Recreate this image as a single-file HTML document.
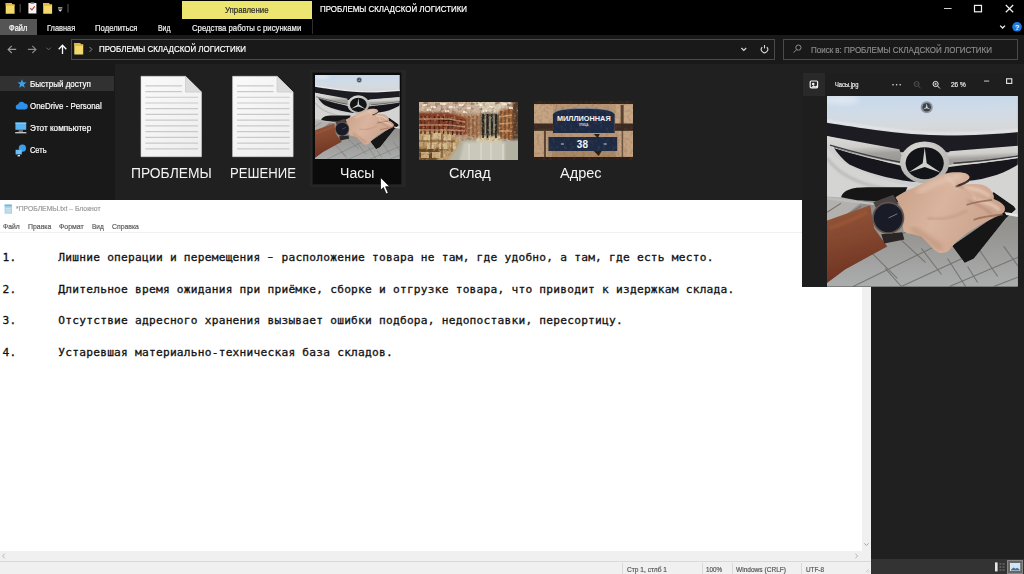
<!DOCTYPE html>
<html lang="ru"><head><meta charset="utf-8"><title>ПРОБЛЕМЫ СКЛАДСКОЙ ЛОГИСТИКИ</title>
<style>
html,body{margin:0;padding:0;}
body{width:1024px;height:574px;position:relative;overflow:hidden;background:#191919;font-family:"Liberation Sans",sans-serif;}
.a{position:absolute;}
.t{-webkit-text-stroke:0.2px currentColor;position:absolute;white-space:nowrap;transform-origin:0 50%;font-family:"Liberation Sans",sans-serif;}
svg{position:absolute;display:block;overflow:visible;}
#titlebar{left:0;top:0;width:1024px;height:35px;background:#000;}
#addrrow{left:0;top:35px;width:1024px;height:28px;background:#191919;}
#nav{left:0;top:63px;width:115px;height:137px;background:#191919;}
#content{left:115.300px;top:63.600px;width:909px;height:511px;background:#202020;}
#ytab{left:182px;top:0.5px;width:130px;height:18.2px;background:#ece56f;}
#filetab{left:0;top:19px;width:37px;height:16px;background:#555;}
.box{border:1px solid #4a4a4a;box-sizing:border-box;background:#191919;}
#navsel{left:0;top:76px;width:113.500px;height:15.200px;background:#313131;}
#tilesel{left:312px;top:72px;width:90px;height:113px;background:#0b0b0b;border:1px solid #1c1c1c;box-sizing:border-box;}
#notepad{left:0;top:200px;width:871px;height:374px;background:#fff;}
#np_menu_line{left:0;top:232px;width:871px;height:1px;background:#f0f0f0;}
#np_vscroll{left:862px;top:233px;width:9px;height:318px;background:#f0f0f0;}
#np_hscroll{left:0;top:551px;width:871px;height:10px;background:#f0f0f0;}
#np_status{left:0;top:561px;width:871px;height:13px;background:#f0f0f0;border-top:1px solid #d9d9d9;box-sizing:border-box;}
.sdiv{position:absolute;top:563px;width:1px;height:11px;background:#d9d9d9;}
#pv{left:802px;top:72.500px;width:222px;height:214px;background:#1e1e1e;}
#pvicon{left:802.500px;top:72.500px;width:22.800px;height:23.700px;background:#292929;}
#exstatus{left:871px;top:559px;width:153px;height:15px;background:#333;}
#viewsel{left:1007px;top:560px;width:16px;height:14px;background:#666;border:1px solid #888;box-sizing:border-box;}
pre#txt{position:absolute;left:2.6px;top:250.1px;margin:0;font-family:"DejaVu Sans Mono","Liberation Mono",monospace;font-size:11.2px;letter-spacing:0.235px;line-height:15.85px;color:#111;-webkit-text-stroke:0.3px #111;tab-size:8;-moz-tab-size:8;white-space:pre;}

</style></head><body>
<svg width="0" height="0" style="left:0;top:0"><defs>
<clipPath id="whclip"><path d="M0 0H99V39H40L28 58H0z"/></clipPath>
<filter id="nzd" x="0" y="0" width="100%" height="100%"><feTurbulence type="fractalNoise" baseFrequency="0.33" numOctaves="2" seed="4"/><feColorMatrix type="matrix" values="0 0 0 0 0.16  0 0 0 0 0.09  0 0 0 0 0.05  0 0 0 3.2 -1.5"/></filter>
<filter id="nzl" x="0" y="0" width="100%" height="100%"><feTurbulence type="fractalNoise" baseFrequency="0.4" numOctaves="2" seed="11"/><feColorMatrix type="matrix" values="0 0 0 0 1  0 0 0 0 0.93  0 0 0 0 0.82  0 0 0 3.2 -1.7"/></filter>
<filter id="bl1" x="-10%" y="-10%" width="120%" height="120%"><feGaussianBlur stdDeviation="1.1"/></filter>
<filter id="bl2" x="-10%" y="-10%" width="120%" height="120%"><feGaussianBlur stdDeviation="2.4"/></filter>
<filter id="bl05" x="-10%" y="-10%" width="120%" height="120%"><feGaussianBlur stdDeviation="0.5"/></filter>
<linearGradient id="g-hood" x1="0.3" y1="0" x2="0.4" y2="1"><stop offset="0" stop-color="#c6d8ec"/><stop offset="0.45" stop-color="#d0dbe6"/><stop offset="0.8" stop-color="#d6d9dc"/><stop offset="1" stop-color="#d2d3d4"/></linearGradient>
<linearGradient id="g-bar" x1="0" y1="0" x2="0.15" y2="1"><stop offset="0" stop-color="#dcdcda"/><stop offset="0.45" stop-color="#cfcecb"/><stop offset="0.7" stop-color="#a3a19d"/><stop offset="1" stop-color="#999793"/></linearGradient>
<linearGradient id="g-skin" x1="0" y1="0" x2="1" y2="0.4"><stop offset="0" stop-color="#c99f86"/><stop offset="0.5" stop-color="#d9b49e"/><stop offset="1" stop-color="#cba28c"/></linearGradient>
<linearGradient id="g-pave" x1="0" y1="0" x2="0" y2="1"><stop offset="0" stop-color="#8f8d8b"/><stop offset="0.35" stop-color="#93928f"/><stop offset="1" stop-color="#acaeae"/></linearGradient>
<linearGradient id="g-sleeve" x1="0.3" y1="0" x2="0.5" y2="1"><stop offset="0" stop-color="#95563a"/><stop offset="0.6" stop-color="#7c402a"/><stop offset="1" stop-color="#6a2e20"/></linearGradient>
<radialGradient id="g-ring" cx="0.4" cy="0.3" r="0.8"><stop offset="0" stop-color="#e3e2df"/><stop offset="1" stop-color="#a9a8a4"/></radialGradient>

<symbol id="ph-watch" viewBox="0 0 190 190" preserveAspectRatio="none">
  <rect width="190" height="190" fill="#cdcecf"/>
  <!-- pavement -->
  <g filter="url(#bl05)">
  <path d="M-2 99L70 104 192 116V192H-2z" fill="url(#g-pave)"/>
  <path d="M-2 99L40 102 10 125 -2 128z" fill="#b2b1ae"/>
  <g stroke="#6e6d6a" stroke-width="1.100" fill="none" opacity="0.850">
    <path d="M0 176L82 134M26 190L124 142M74 190L152 154M122 190L192 160M166 190L192 180"/>
    <path d="M42 154L70 182M70 140L98 166M94 152L114 178M120 162L138 190M152 154L170 180M176 150L192 172M58 172L74 190M140 170L150 186"/>
    <path d="M0 116L14 107M2 130L34 110"/>
  </g>
  </g>
  <!-- hood -->
  <path d="M-2 -2H192V36C170 38 145 39.500 120 39.500 96 39.500 72 37 48 34 24 30.500 10 28.500 -2 26.500z" fill="url(#g-hood)"/>
  <path d="M-2 24.500C10 26.500 24 28.500 48 32 72 35 96 37.500 120 37.500 145 37.500 170 36 192 34" stroke="#e6e8ea" stroke-width="2.400" fill="none" filter="url(#bl1)"/>
  <ellipse cx="14" cy="4" rx="18" ry="5" fill="#dde6f0" filter="url(#bl2)"/>
  <!-- upper dark grille band -->
  <path d="M-2 26.500C10 28.500 24 30.500 48 34 72 37 96 39.500 120 39.500 145 39.500 170 38 192 36V50L122 56H72L-2 39.600z" fill="#1b1c20" filter="url(#bl05)"/>
  <!-- bumper white zone -->
  <path d="M-2 48C6 62 30 80 85 90 125 93 165 85 192 64V118L60 104 -2 100z" fill="#d4d4d3"/>
  <path d="M0 62C14 82 40 92 84 96" stroke="#bcbcbb" stroke-width="3" fill="none" filter="url(#bl1)"/>
  <!-- lower dark grille band -->
  <path d="M6 50C30 58 55 65 76 70L120 71C150 67 172 65 192 61.500V67C180 76 160 83 138 85L85 85.500C60 82 38 76 22.300 68.200 16 63.500 10 57 6 50z" fill="#17181b" filter="url(#bl05)"/>
  <!-- silver wings -->
  <path d="M-2 39.600L72 53 78 68C50 64 20 56 -2 47z" fill="url(#g-bar)"/>
  <path d="M192 49.500L122 55 118 69C150 66.500 175 62 192 58z" fill="url(#g-bar)"/>
  <path d="M3 49C30 57 55 63 76 66.500" stroke="#3c3d41" stroke-width="1.500" fill="none"/>
  <path d="M192 59.500C170 63 150 65.500 126 67" stroke="#3c3d41" stroke-width="1.400" fill="none"/>
  <path d="M5 51C30 59 55 65 78 69" stroke="#d8d8d6" stroke-width="1" fill="none"/>
  <path d="M192 61C170 64.500 150 67 124 69" stroke="#d8d8d6" stroke-width="1" fill="none"/>
  <!-- ring -->
  <ellipse cx="97.300" cy="66.200" rx="24.500" ry="20.800" fill="url(#g-ring)"/>
  <ellipse cx="97.300" cy="67" rx="19" ry="16" fill="#131417"/>
  <path d="M97.300 51L99.300 67 113.500 76.500 97.300 70.800 81.500 76 95.300 67z" fill="#cfcfcb"/>
  <!-- hood badge -->
  <circle cx="99.300" cy="11.200" r="6" fill="#8e959c"/><circle cx="99.300" cy="11.200" r="4.300" fill="#3c434c"/><path d="M99.300 7.200l.8 4 3 2.200-3.800-1.200-3.800 1.200 3-2.200z" fill="#d8dde2"/>
  <!-- lower intake -->
  <path d="M14 101C16 94 24 91 40 91H80L74 106 30 104z" fill="#151618" filter="url(#bl05)"/>
  <path d="M0 102L50 108 72 111" stroke="#bdbdbb" stroke-width="2.200" fill="none"/>
  <!-- black cloth -->
  <path d="M124.700 149.400L137.200 166.400 146.200 162 178 122 188 113 186 110 166 96 158 100 170 118z" fill="#121214" filter="url(#bl05)"/>
  <path d="M176.700 115.600L192 118V121L178.500 118.800z" fill="#e8e8e8"/>
  <!-- sleeve -->
  <path d="M-2 125L43 109 47 132 60 150 18 173 -2 188z" fill="url(#g-sleeve)" filter="url(#bl05)"/>
  <path d="M2 132C14 128 28 122 40 116" stroke="#a35d38" stroke-width="3" fill="none" opacity="0.600" filter="url(#bl1)"/>
  <!-- hand -->
  <g filter="url(#bl05)">
  <path d="M68.200 100.900C74 97 80 94 85.200 92 93 88 100 85 106.700 82 111 80 114 78.500 117.500 77.600 122 76.300 126 76 130 76.100 134 76.200 137 76.500 139 77.600 141.500 79 142.500 80.500 141.700 82 140 85 136 87 131 88.500 138 88 146 87.500 153.400 88.300 159 89.500 162 92 164.200 95.500 166 98 166.600 100.500 166 102.700 170 104 174 106.500 176.700 109.900 178 113 177 115.500 175 117 173 119 170.500 120 167.800 120.600L153.400 127.800 139 136.800 128.300 145.800 121 154.700C118 156.500 115 157 112 156.500 108 155 105.500 152.500 103 149.400L94.200 140.400C89 138.500 84 137.500 79.800 136.800L76.200 135C75 128 75 120 75.300 113.500 73 109 70.500 105 68.200 100.900z" fill="url(#g-skin)"/>
  </g>
  <path d="M90 96C104 88 118 82 134 80" stroke="#e9cdbb" stroke-width="4" fill="none" opacity="0.800" filter="url(#bl2)"/>
  <path d="M138 92C148 92 156 95 162 100M150 104C160 106 168 110 172 114" stroke="#e6c8b5" stroke-width="3.500" fill="none" opacity="0.800" filter="url(#bl1)"/>
  <path d="M128 89C136 90 142 94 146 100M140 104C150 108 158 112 164 118" stroke="#b08068" stroke-width="1.600" fill="none" opacity="0.700" filter="url(#bl1)"/>
  <path d="M84 132C96 138 106 146 114 152" stroke="#b58870" stroke-width="5" fill="none" opacity="0.600" filter="url(#bl2)"/>
  <path d="M100 122C112 124 126 122 140 114" stroke="#c29a84" stroke-width="3" fill="none" opacity="0.600" filter="url(#bl1)"/>
  <path d="M128 90.500C132 89 137 87.500 141 84.500" stroke="#2a1e1a" stroke-width="2.200" fill="none" opacity="0.850" filter="url(#bl05)"/>
  <path d="M164.500 103.600C156 104.500 147 106 139 108.500" stroke="#8a6450" stroke-width="1.800" fill="none" opacity="0.750" filter="url(#bl05)"/>
  <path d="M175 118.200C166 119 155 120.500 146 123.500" stroke="#8a6450" stroke-width="1.800" fill="none" opacity="0.700" filter="url(#bl05)"/>
  <path d="M118 80C124 84 128 88 130 93M136 90C142 94 146 98 148 104" stroke="#e8ccba" stroke-width="2.500" fill="none" opacity="0.600" filter="url(#bl1)"/>
  <!-- strap + watch -->
  <path d="M46 106L66 98.500 71 108 50 114z" fill="#4a4341"/>
  <path d="M54 138L75 136 77 143 57 147z" fill="#2a2625"/>
  <circle cx="61" cy="121.500" r="16" fill="#62564f"/>
  <circle cx="61" cy="121.500" r="14.300" fill="#191b26"/>
  <path d="M61.300 121.600L70 117.500" stroke="#8a8f9a" stroke-width="0.800"/>
</symbol>

<symbol id="ph-wh" viewBox="0 0 99 58" preserveAspectRatio="none">
  <rect width="99" height="58" fill="#b59a7c"/>
  <g filter="url(#bl1)">
    <rect x="-2" y="-2" width="103" height="13" fill="#cbb098"/>
    <path d="M52 -2H100V10L66 15z" fill="#d8c9b2"/>
    <path d="M-2 10H28L48 16V33L30 31H-2z" fill="#873a21"/>
    <path d="M28 9L62 14V36L48 33V16z" fill="#ad7e5a"/>
    <path d="M62 11H80V35H62z" fill="#4f4a3b"/>
    <path d="M80 8L93 5V38L80 36z" fill="#a9693a"/>
    <rect x="93" y="-2" width="8" height="42" fill="#5a3a26"/>
    <path d="M28 38H101V60H22z" fill="#b3b1a2"/>
    <path d="M45 40H86V60H40z" fill="#c9c8bb"/>
    <path d="M-2 29H30L42 40 28 60H-2z" fill="#bd9a68"/>
    <path d="M-2 46H22L18 60H-2z" fill="#70481f"/>
    <rect x="58" y="34" width="24" height="6" fill="#d6c6a0"/>
  </g>
  <g filter="url(#bl05)">
    <path d="M2 14v18M6 14v18M11 14v18M15.500 14v18M20 14v18M24.500 14v18M29 15v17M33.500 16v17M38 17v16M42 17v16" stroke="#4e1d10" stroke-width="1.300"/>
    <path d="M0 17H30L46 20M0 23H30L46 25M0 28H30L46 29" stroke="#e0b890" stroke-width="1.300" opacity="0.650"/>
    <path d="M3 3h5M12 5h5M21 2h6M30 5h6M40 3h5M48 6h4M58 3h6M70 5h5M82 2h6M8 8h4M26 9h4M44 10h4M64 9h4M90 6h4" stroke="#fff3e4" stroke-width="1.700"/>
    <path d="M5 1h4M16 2h5M34 1h5M52 2h4M76 1h5M88 3h4M22 7h3M60 7h3" stroke="#8a6a58" stroke-width="1.300" opacity="0.700"/>
    <path d="M50 14v20M54 14v21M58 14v22" stroke="#6e3a20" stroke-width="1" opacity="0.800"/>
    <path d="M64 12v24M68.500 12v24M73 12v22M77 12v24" stroke="#1f1e16" stroke-width="1.700"/>
    <path d="M66.300 14v18M71 14v18M75 13v18" stroke="#d8d4c0" stroke-width="0.900" opacity="0.800"/>
    <path d="M82 9v28M86 8v29M90 7v31" stroke="#5e3a20" stroke-width="1.100"/>
    <path d="M80 15L93 13M80 22L93 21M80 29L93 29" stroke="#e0bc90" stroke-width="1.300" opacity="0.700"/>
    <path d="M4 33h7v5h-7zM14 31h8v6h-8zM25 33h7v6h-7zM8 41h9v6H8zM20 41h8v6h-8zM2 50h8v6H2zM13 50h8v6h-8zM31 41h6v6h-6z" fill="#dcc296" opacity="0.800"/>
    <path d="M0 39h36M0 48h30M12 31v26M23 32v24M33 38v12" stroke="#5a3816" stroke-width="1.100" opacity="0.750"/>
    <path d="M50 42v16M62 41v17M72 41v17M84 42v16" stroke="#e4e4da" stroke-width="1.600" opacity="0.550"/>
  </g>
  <g clip-path="url(#whclip)"><rect width="99" height="58" filter="url(#nzd)" opacity="0.450"/>
  <rect width="99" height="58" filter="url(#nzl)" opacity="0.350"/></g>
</symbol>

<symbol id="ph-addr" viewBox="0 0 100 59" preserveAspectRatio="none">
  <rect width="100" height="59" fill="#b89675"/>
  <g filter="url(#bl05)">
  <rect x="0" y="0" width="100" height="3" fill="#2e221a"/>
  <rect x="0" y="56" width="100" height="3" fill="#2a1f18"/>
  <rect x="0" y="3.700" width="19" height="19" fill="#c4a482"/><rect x="82" y="3.700" width="18" height="19" fill="#c7a786"/><rect x="87" y="4" width="3" height="26" fill="#5a4030"/>
  <rect x="0" y="22.500" width="19" height="7.300" fill="#3a2a20"/><rect x="81" y="22.500" width="19" height="7.300" fill="#3a2a20"/>
  <rect x="0" y="30" width="13" height="25" fill="#c0a07e"/><rect x="85" y="30" width="15" height="25" fill="#c2a280"/>
  <rect x="10" y="30" width="2" height="26" fill="#5a4434"/><rect x="88" y="30" width="1.500" height="26" fill="#6a5240"/>
  <rect x="18" y="50" width="64" height="6" fill="#a88866"/>
  <path d="M19 13C22 9 30 7.500 50 7.500S78 9 81 13V32H19z" fill="#1c2b45"/>
  <path d="M19 13C22 9 30 7.500 50 7.500S78 9 81 13" fill="none" stroke="#8a9ab0" stroke-width="0.600"/>
  <rect x="14.500" y="36" width="69" height="14" fill="#1b2a44"/>
  <path d="M60 33l6 0 -2 4z" fill="#241c18"/><path d="M60 50l8 0 -3 5z" fill="#241c18"/>
  </g>
  <rect width="100" height="59" filter="url(#nzd)" opacity="0.250"/>
  <text x="50" y="19.900" font-family="Liberation Sans, sans-serif" font-weight="bold" font-size="7.200" fill="#f2f4f8" text-anchor="middle" textLength="54" lengthAdjust="spacingAndGlyphs">МИЛЛИОННАЯ</text>
  <text x="50" y="24.600" font-family="Liberation Sans, sans-serif" font-weight="bold" font-size="2.800" fill="#cfd6e2" text-anchor="middle">УЛИЦА</text>
  <text x="48.600" y="46.800" font-family="Liberation Sans, sans-serif" font-weight="bold" font-size="10" fill="#f2f4f8" text-anchor="middle">38</text>
  <path d="M27 43h3M70 43h3" stroke="#d0d6e0" stroke-width="1.200"/>
</symbol>

</defs></svg>

<div class="a" id="content"></div>
<div class="a" id="titlebar"></div>
<div class="a" id="addrrow"></div>
<div class="a" id="nav"></div>
<div class="a" id="ytab"></div>
<div class="a" id="filetab"></div>
<div class="a" style="left:311.500px;top:19px;width:1px;height:15px;background:#2e2e2e"></div>
<div class="a box" style="left:71px;top:39px;width:704px;height:21px"></div>
<div class="a box" style="left:783px;top:39px;width:235px;height:21px"></div>
<div class="a" id="navsel"></div>
<div class="a" style="left:310px;top:69.500px;width:95.500px;height:117px;background:#262626"></div>
<div class="a" id="tilesel"></div>

<!-- title bar quick-access icons, window buttons, nav arrows -->
<svg id="chrome" width="1024" height="64" viewBox="0 0 1024 64" style="left:0;top:0">
  <!-- QAT -->
  <path d="M5.7 3h5.6l1.2 1.6h2.1v9.1H5.7z" fill="#f3d86a"/><path d="M5.7 3h5.6l1.2 1.6h2.1v1.2H5.7z" fill="#e2b84a"/>
  <rect x="19.6" y="4" width="1.2" height="8.5" fill="#4a4a4a"/>
  <rect x="28.4" y="3" width="8" height="10.5" fill="#f4f4f4"/><path d="M30.3 8.2l1.6 1.8 2.8-3.6" stroke="#c0392b" stroke-width="1.1" fill="none"/><rect x="30.5" y="2.4" width="3.8" height="1.6" fill="#9a9a9a"/>
  <path d="M43.2 3h5.6l1.2 1.6h2.1v9.1h-8.9z" fill="#f3d86a"/><path d="M43.2 3h5.6l1.2 1.6h2.1v1.2h-8.9z" fill="#e2b84a"/>
  <rect x="58" y="7.4" width="4.4" height="1" fill="#e8e8e8"/><path d="M58 9.4h4.4l-2.2 2.4z" fill="#e8e8e8"/>
  <rect x="67.4" y="4" width="1.2" height="8.5" fill="#4a4a4a"/>
  <!-- window buttons -->
  <rect x="944" y="8" width="7.6" height="0.9" fill="#e6e6e6"/>
  <rect x="974.5" y="5.4" width="7" height="6.4" fill="none" stroke="#f2f2f2" stroke-width="1.2"/>
  <path d="M1005.8 5l7.4 7.2M1013.2 5l-7.4 7.2" stroke="#f2f2f2" stroke-width="1.2" fill="none"/>
  <path d="M1000.2 25.6l2.4 2.4 2.4-2.4" stroke="#f2f2f2" stroke-width="1.3" fill="none"/>
  <circle cx="1017" cy="26.8" r="4.8" fill="#1f7ae0"/>
  <text x="1017" y="29.6" font-family="Liberation Sans, sans-serif" font-size="7.6" font-weight="bold" fill="#fff" text-anchor="middle">?</text>
  <!-- nav arrows -->
  <path d="M16.2 49.4H8.2M11.8 45.8l-3.7 3.6 3.7 3.6" stroke="#9a9a9a" stroke-width="1.1" fill="none"/>
  <path d="M27.9 49.4h8M32.3 45.8l3.7 3.6-3.7 3.6" stroke="#8a8a8a" stroke-width="1.1" fill="none"/>
  <path d="M46.4 47.6l2.2 2.2 2.2-2.2" stroke="#6a6a6a" stroke-width="1" fill="none"/>
  <path d="M62.5 54V45.4M58.7 49.2l3.8-3.9 3.8 3.9" stroke="#ffffff" stroke-width="1.3" fill="none"/>
  <path d="M74.3 43h5.6l1.2 1.6h2.1v10H74.3z" fill="#f3d86a"/><path d="M74.3 43h5.6l1.2 1.6h2.1v1.3H74.3z" fill="#e2b84a"/>
  <path d="M89.6 47l2.3 2.4-2.3 2.4" stroke="#9a9a9a" stroke-width="0.9" fill="none"/>
  <path d="M741.4 48l2.4 2.4 2.4-2.4" stroke="#d8d8d8" stroke-width="1.2" fill="none"/>
  <path d="M762.2 47.2a3.2 3.2 0 1 0 4.6 0" stroke="#d8d8d8" stroke-width="1.1" fill="none"/><path d="M764.5 45v3.4" stroke="#d8d8d8" stroke-width="1.1"/>
  <circle cx="798.4" cy="47.6" r="2.6" stroke="#9a9a9a" stroke-width="0.9" fill="none"/><path d="M796.6 49.6l-3 3" stroke="#9a9a9a" stroke-width="0.9"/>
</svg>

<!-- nav icons -->
<svg id="navicons" width="115" height="140" viewBox="0 60 115 140" style="left:0;top:60px">
  <path d="M22 79.2l1.2 3.1 3.3.2-2.6 2.1.9 3.2-2.8-1.8-2.8 1.8.9-3.2-2.6-2.1 3.3-.2z" fill="#3aa0ee"/>
  <path d="M17.6 109.4a2.6 2.6 0 0 1 .5-5.1 3.6 3.6 0 0 1 6.6-.8 2.9 2.900 0 0 1 .2 5.900z" fill="#2d8fe8"/>
  <rect x="15.4" y="122.6" width="10.8" height="7.2" fill="#5ab4f2"/><rect x="15.4" y="122.600" width="10.8" height="1.2" fill="#8fd0fa"/><rect x="18.6" y="130.600" width="4.4" height="0.9" fill="#cfd8df"/><rect x="15.2" y="132.2" width="11.2" height="1.1" fill="#e8eef2"/>
  <circle cx="22.400" cy="148.2" r="3.600" fill="#3aa0ee"/><rect x="15.6" y="149.8" width="6.2" height="4.6" fill="#6cc0f6"/><rect x="17.6" y="155" width="2.4" height="1.4" fill="#d8e2ea"/>
</svg>

<!-- document icons -->
<svg id="docs" width="180" height="90" viewBox="130 72 180 90" style="left:130px;top:72px">
  <defs><linearGradient id="pg" x1="0" y1="0" x2="1" y2="1"><stop offset="0" stop-color="#fafafa"/><stop offset="1" stop-color="#ededed"/></linearGradient>
  <g id="doc">
    <path d="M0 0h44.500L60.500 15.800V80.400H0z" fill="url(#pg)" stroke="#d4d4d4" stroke-width="0.6"/>
    <path d="M44.500 0v15.800h16z" fill="#dcdcdc"/><path d="M44.500 0v15.800h16" fill="none" stroke="#c4c4c4" stroke-width="0.6"/>
    <g stroke="#c9c9c9" stroke-width="1.2">
      <path d="M4.400 9.500H41M4.400 15.230H41M4.400 20.960H57M4.400 26.690H57M4.400 32.420H57M4.400 38.150H57M4.400 43.880H57M4.400 49.610H57M4.400 55.340H57M4.400 61.070H57M4.400 66.800H57M4.400 72.530H57"/>
    </g>
  </g></defs>
  <use href="#doc" x="141" y="76.300"/>
  <use href="#doc" x="232.600" y="76.300"/>
</svg>

<!-- thumbnails -->
<svg width="84.600" height="84.500" viewBox="0 0 190 190" preserveAspectRatio="none" style="left:315.400px;top:74.500px;overflow:hidden"><use href="#ph-watch"/></svg>
<svg width="99" height="58" viewBox="0 0 99 58" preserveAspectRatio="none" style="left:419px;top:101.800px;overflow:hidden"><use href="#ph-wh"/></svg>
<svg width="99.600" height="59" viewBox="0 0 100 59" preserveAspectRatio="none" style="left:533.600px;top:100.800px;overflow:hidden"><use href="#ph-addr"/></svg>

<!-- notepad -->
<div class="a" id="notepad"></div>
<div class="a" id="np_menu_line"></div>
<div class="a" id="np_vscroll"></div>
<div class="a" id="np_hscroll"></div>
<div class="a" id="np_status"></div>
<div class="sdiv" style="left:622px"></div><div class="sdiv" style="left:702px"></div><div class="sdiv" style="left:732px"></div><div class="sdiv" style="left:801px"></div>
<svg id="npicons" width="871" height="374" viewBox="0 200 871 374" style="left:0;top:200px">
  <path d="M4.600 204.600h6.200l1.200 1.200v8H4.600z" fill="#a9d3e6"/><path d="M4.600 204.600h7.400v1.600H4.600z" fill="#7fb4cf"/><path d="M5.800 208.400h5M5.800 210.200h5M5.800 212h5" stroke="#e9f5fa" stroke-width="0.600"/>
  <path d="M864.200 543.300l2.200 2.200 2.200-2.200" stroke="#9a9a9a" stroke-width="0.9" fill="none"/>
  <path d="M4.800 553.600l-2.200 2.400 2.200 2.400" stroke="#b0b0b0" stroke-width="0.9" fill="none"/>
  <path d="M855.400 553.600l2.200 2.400-2.200 2.400" stroke="#b0b0b0" stroke-width="0.9" fill="none"/>
  <path d="M866 572l3-3M868 572.600l1.600-1.600" stroke="#bdbdbd" stroke-width="0.7"/>
</svg>
<pre id="txt">1.	Лишние операции и перемещения <span style="display:inline-block;transform:translateY(-1.100px) scaleX(0.680)">–</span> расположение товара не там, где удобно, а там, где есть место.

2.	Длительное время ожидания при приёмке, сборке и отгрузке товара, что приводит к издержкам склада.

3.	Отсутствие адресного хранения вызывает ошибки подбора, недопоставки, пересортицу.

4.	Устаревшая материально-техническая база складов.</pre>

<!-- explorer status bar (right) -->
<div class="a" id="exstatus"></div>
<div class="a" id="viewsel"></div>
<svg width="40" height="15" viewBox="990 559 40 15" style="left:990px;top:559px">
  <rect x="995" y="562.400" width="2.600" height="9" fill="#e6e6e6"/>
  <path d="M999.400 564h2M1002.600 564h2M999.400 567h2M1002.600 567h2M999.400 570h2M1002.600 570h2" stroke="#8a8a8a" stroke-width="0.900"/>
  <rect x="1010.400" y="563.600" width="9.400" height="7" fill="#cfe6f7"/><rect x="1010.400" y="563.600" width="9.400" height="7" fill="none" stroke="#f4f4f4" stroke-width="0.800"/><path d="M1011 569.400l2.600-2 2 1.400 1.600-1 2.400 1.600v1H1011z" fill="#4a6f96"/>
</svg>

<!-- preview window -->
<div class="a" id="pv"></div>
<div class="a" id="pvicon"></div>
<svg width="222" height="26" viewBox="802 72 222 26" style="left:802px;top:72px">
  <rect x="810.200" y="81" width="7.400" height="6.800" rx="1" fill="none" stroke="#f0f0f0" stroke-width="1.200"/><circle cx="813.200" cy="84" r="1.300" fill="#f0f0f0"/><path d="M811 87.400l2.600-2.200 1.600 1.200 1.400-1 1.200 1v1z" fill="#f0f0f0"/>
  <circle cx="893" cy="84.800" r="0.800" fill="#e0e0e0"/><circle cx="896.600" cy="84.800" r="0.800" fill="#e0e0e0"/><circle cx="900.200" cy="84.800" r="0.800" fill="#e0e0e0"/>
  <circle cx="916.600" cy="84" r="2.500" fill="none" stroke="#555" stroke-width="0.900"/><path d="M918.400 86l2.200 2.400" stroke="#555" stroke-width="0.900"/><path d="M915.400 84h2.400" stroke="#555" stroke-width="0.700"/>
  <circle cx="935.600" cy="84" r="2.600" fill="none" stroke="#e8e8e8" stroke-width="1"/><path d="M937.600 86l2.300 2.500" stroke="#e8e8e8" stroke-width="1"/><path d="M934.300 84h2.600M935.600 82.700v2.600" stroke="#e8e8e8" stroke-width="0.700"/>
  <rect x="984" y="80.600" width="5.200" height="0.900" fill="#dcdcdc"/>
  <rect x="1006.600" y="78.800" width="5.200" height="4.600" fill="none" stroke="#e6e6e6" stroke-width="1.100"/>
</svg>
<svg width="190.800" height="190.500" viewBox="0 0 190 190" preserveAspectRatio="none" style="left:826.900px;top:96px;overflow:hidden"><use href="#ph-watch"/></svg>

<span id="t_upr" class="t" style="left:224.5px;top:4.28px;font-size:8.6px;line-height:12.04px;color:#2a2a2a;transform:scaleX(0.9104);">Управление</span>
<span id="t_title" class="t" style="left:320px;top:3.28px;font-size:8.6px;line-height:12.04px;color:#ffffff;transform:scaleX(0.9227);">ПРОБЛЕМЫ СКЛАДСКОЙ ЛОГИСТИКИ</span>
<span id="t_sred" class="t" style="left:191.7px;top:22.38px;font-size:8.6px;line-height:12.04px;color:#f0f0f0;transform:scaleX(0.9027);">Средства работы с рисунками</span>
<span id="t_file" class="t" style="left:8.6px;top:21.88px;font-size:8.6px;line-height:12.04px;color:#ffffff;transform:scaleX(0.8656);">Файл</span>
<span id="t_glav" class="t" style="left:47px;top:21.88px;font-size:8.6px;line-height:12.04px;color:#f0f0f0;transform:scaleX(0.8619);">Главная</span>
<span id="t_pod" class="t" style="left:95px;top:21.88px;font-size:8.6px;line-height:12.04px;color:#f0f0f0;transform:scaleX(0.8953);">Поделиться</span>
<span id="t_vid" class="t" style="left:158px;top:21.88px;font-size:8.6px;line-height:12.04px;color:#f0f0f0;transform:scaleX(0.8040);">Вид</span>
<span id="t_addr" class="t" style="left:99px;top:43.46px;font-size:9.2px;line-height:12.88px;color:#ffffff;transform:scaleX(0.8630);">ПРОБЛЕМЫ СКЛАДСКОЙ ЛОГИСТИКИ</span>
<span id="t_srch" class="t" style="left:811px;top:43.54px;font-size:8.8px;line-height:12.32px;color:#8a8a8a;transform:scaleX(0.9074);">Поиск в: ПРОБЛЕМЫ СКЛАДСКОЙ ЛОГИСТИКИ</span>
<span id="n1" class="t" style="left:29.8px;top:77.71px;font-size:8.7px;line-height:12.18px;color:#ffffff;transform:scaleX(0.9229);">Быстрый доступ</span>
<span id="n2" class="t" style="left:29.8px;top:99.51px;font-size:8.7px;line-height:12.18px;color:#ffffff;transform:scaleX(0.9110);">OneDrive - Personal</span>
<span id="n3" class="t" style="left:29.8px;top:121.91px;font-size:8.7px;line-height:12.18px;color:#ffffff;transform:scaleX(0.9420);">Этот компьютер</span>
<span id="n4" class="t" style="left:29.8px;top:144.21px;font-size:8.7px;line-height:12.18px;color:#ffffff;transform:scaleX(0.8537);">Сеть</span>
<span id="l1" class="t" style="left:131px;top:162.16px;font-size:15.2px;line-height:21.28px;color:#f4f4f4;transform:scaleX(0.9099);-webkit-text-stroke:0;">ПРОБЛЕМЫ</span>
<span id="l2" class="t" style="left:230.3px;top:162.16px;font-size:15.2px;line-height:21.28px;color:#f4f4f4;transform:scaleX(0.8634);-webkit-text-stroke:0;">РЕШЕНИЕ</span>
<span id="l3" class="t" style="left:340.3px;top:162.16px;font-size:15.2px;line-height:21.28px;color:#f4f4f4;transform:scaleX(0.9274);-webkit-text-stroke:0;">Часы</span>
<span id="l4" class="t" style="left:448.7px;top:162.16px;font-size:15.2px;line-height:21.28px;color:#f4f4f4;transform:scaleX(0.9507);-webkit-text-stroke:0;">Склад</span>
<span id="l5" class="t" style="left:560.4px;top:162.16px;font-size:15.2px;line-height:21.28px;color:#f4f4f4;transform:scaleX(0.9544);-webkit-text-stroke:0;">Адрес</span>
<span id="p_name" class="t" style="left:834.6px;top:80.38px;font-size:6.6px;line-height:9.24px;color:#e8e8e8;transform:scaleX(0.8753);">Часы.jpg</span>
<span id="p_pct" class="t" style="left:951px;top:79.56px;font-size:7.2px;line-height:10.08px;color:#e8e8e8;transform:scaleX(0.9030);">26 %</span>
<span id="np_title" class="t" style="left:15.6px;top:204.14px;font-size:7.8px;line-height:10.92px;color:#9a9a9a;transform:scaleX(0.8713);">*ПРОБЛЕМЫ.txt – Блокнот</span>
<span id="m1" class="t" style="left:2.9px;top:221.64px;font-size:7.8px;line-height:10.92px;color:#5a5a5a;transform:scaleX(0.8659);">Файл</span>
<span id="m2" class="t" style="left:27.9px;top:221.64px;font-size:7.8px;line-height:10.92px;color:#5a5a5a;transform:scaleX(0.8845);">Правка</span>
<span id="m3" class="t" style="left:59.2px;top:221.64px;font-size:7.8px;line-height:10.92px;color:#5a5a5a;transform:scaleX(0.8952);">Формат</span>
<span id="m4" class="t" style="left:92.2px;top:221.64px;font-size:7.8px;line-height:10.92px;color:#5a5a5a;transform:scaleX(0.8292);">Вид</span>
<span id="m5" class="t" style="left:112.1px;top:221.64px;font-size:7.8px;line-height:10.92px;color:#5a5a5a;transform:scaleX(0.8793);">Справка</span>
<span id="s1" class="t" style="left:627px;top:564.94px;font-size:7.8px;line-height:10.92px;color:#555;transform:scaleX(0.8474);">Стр 1, стлб 1</span>
<span id="s2" class="t" style="left:706px;top:564.94px;font-size:7.8px;line-height:10.92px;color:#555;transform:scaleX(0.8019);">100%</span>
<span id="s3" class="t" style="left:736px;top:564.94px;font-size:7.8px;line-height:10.92px;color:#555;transform:scaleX(0.8423);">Windows (CRLF)</span>
<span id="s4" class="t" style="left:806px;top:564.94px;font-size:7.8px;line-height:10.92px;color:#555;transform:scaleX(0.8147);">UTF-8</span>

<!-- mouse cursor -->
<svg width="16" height="22" viewBox="0 0 16 22" style="left:380px;top:177px">
  <path d="M0.500 0.400V13.200L3.400 10.500 6.100 17 8.300 16.100 5.600 9.700H9.800z" fill="#fff" stroke="#000" stroke-width="0.700" stroke-linejoin="round"/>
</svg>

</body></html>
